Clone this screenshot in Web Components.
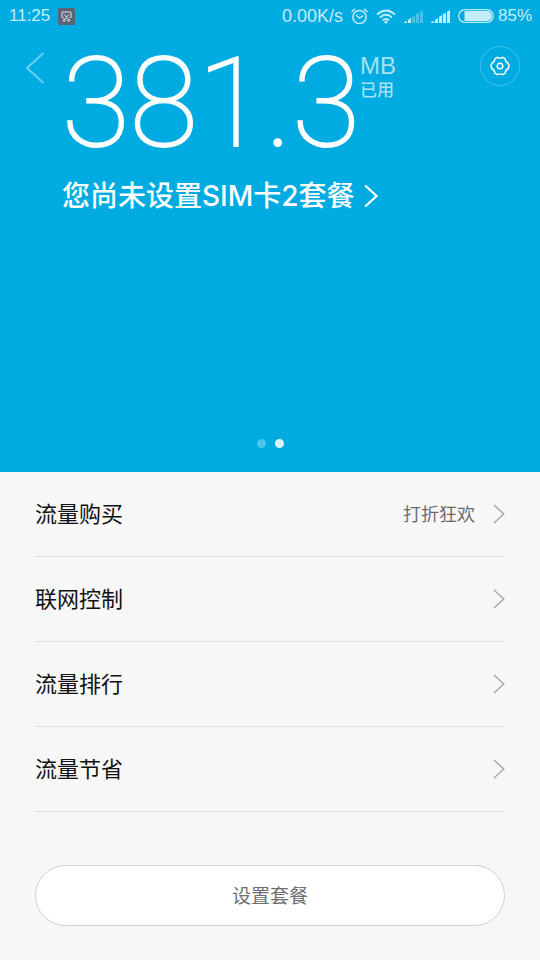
<!DOCTYPE html>
<html lang="zh-CN">
<head>
<meta charset="utf-8">
<meta name="viewport" content="width=device-width, initial-scale=1">
<title>流量</title>
<style>
  html, body { margin: 0; min-height: 100%; background: #f7f7f7; }
  body { font-family: "Liberation Sans", "Noto Sans CJK SC", sans-serif; }
</style>
</head>
<body>
<traffic-app></traffic-app>

<script>
const define = (name, html) => {
  customElements.define(name, class extends HTMLElement {
    constructor() {
      super();
      const t = document.createElement('template');
      t.innerHTML = html;
      this.attachShadow({ mode: 'open' }).append(t.content.cloneNode(true));
    }
  });
};

define('status-bar', `
<style>
  :host { display: flex; align-items: center; justify-content: space-between; height: 32px; padding: 0 8px 0 9px; color: #c4edfa; font-size: 17px; line-height: 20px; }
  div { display: flex; align-items: center; }
  .left, .right { gap: 8px; }
  .speed { font-size: 18px; }
  .right .charge { gap: 4px; }
  svg { display: block; }
</style>
<div class="left">
  <span>11:25</span>
  <svg width="17" height="17" viewBox="0 0 17 17" fill="none"><rect width="17" height="17" rx="2" fill="#5b6373"/><path d="M5.500 9.500H4V4.500Q4 4 4.500 4H12.500Q13 4 13 4.500V9.500H11.500M6.300 6.500L10 11.500M10.700 6.500L7 11.500" stroke="#dde6ee"/><circle cx="6.200" cy="12.300" r="1" stroke="#dde6ee"/><circle cx="10.800" cy="12.300" r="1" stroke="#dde6ee"/></svg>
</div>
<div class="right">
  <span class="speed">0.00K/s</span>
  <svg width="17" height="17" viewBox="0 0 17 17" fill="none" stroke="currentColor" stroke-width="1.500" stroke-linecap="round" stroke-linejoin="round"><circle cx="8.500" cy="9" r="6.600"/><path d="M5.500 7.500L8.500 10L11.500 8M1 3.500L3.500 1.200M16 3.500L13.500 1.200"/></svg>
  <svg width="20" height="15" viewBox="0 0 20 15" fill="none" stroke="currentColor" stroke-width="1.900"><path d="M1 5.500Q10-2.500 19 5.500M4 8.500Q10 3 16 8.500M6.800 11.300Q10 8.500 13.200 11.300"/><circle cx="10" cy="13" r="1.600" fill="currentColor" stroke="none"/></svg>
  <svg width="19" height="13" viewBox="0 0 19 13" fill="currentColor"><path d="M0 13V12L3 11V13ZM4 13V10L7 8V13Z"/><path opacity=".35" d="M8 13V7L11 5V13ZM12 13V4L15 3V13ZM16 13V2L19 0V13Z"/></svg>
  <svg width="19" height="13" viewBox="0 0 19 13" fill="currentColor"><path d="M0 13V12L3 11V13ZM4 13V10L7 8V13ZM8 13V7L11 5V13ZM12 13V4L15 3V13ZM16 13V2L19 0V13Z"/></svg>
  <div class="charge">
    <svg width="36" height="14" viewBox="0 0 36 14"><rect x=".7" y=".7" width="34.600" height="12.600" rx="6.300" fill="none" stroke="currentColor" stroke-width="1.200"/><path d="M6.500 2H29A5 5 0 0 1 29 12H6.500Z" fill="currentColor"/></svg>
    <span>85%</span>
  </div>
</div>`);

define('chevron-icon', `
<style>
  :host { display: block; width: 12px; height: 20px; }
  svg { display: block; width: 100%; height: 100%; }
  path { stroke-width: var(--chevron-stroke, 1.4); }
</style>
<svg viewBox="0 0 12 20" fill="none" stroke="currentColor"><path d="M1 1L10.800 10L1 19"/></svg>`);

define('usage-hero', `
<style>
  :host { display: flex; flex-direction: column; min-height: 472px; background: #00abe1; color: #fff; }
  .top { display: grid; grid-template-columns: 62px auto 1fr 40px; padding-right: 20px; align-items: start; }
  button { font: inherit; color: inherit; background: none; border: 0; padding: 0; cursor: pointer; }
  .back { width: 62px; height: 48px; padding-left: 25px; margin-top: 12px; color: #6fd0ef; }
  .gear { display: grid; place-items: center; width: 40px; height: 40px; border: 1px solid #46c3ea; border-radius: 50%; margin-top: 14px; }
  svg { display: block; }
  .value { font-family: Roboto, sans-serif; font-weight: 100; font-size: 124px; line-height: 144px; -webkit-text-stroke: 2px currentColor; }
  .unit { padding-top: 20px; color: #a5e2f5; font-size: 24px; line-height: 28px; }
  .unit small { display: block; font-size: 17px; line-height: 22px; font-weight: 500; }
  a { display: flex; align-items: center; gap: 9px; align-self: flex-start; margin-left: 62px; color: inherit; text-decoration: none; font-family: Inter, "Noto Sans CJK SC", sans-serif; font-size: 28px; line-height: 40px; font-weight: 500; }
  a chevron-icon { width: 14px; height: 24px; }
  .dots { display: flex; justify-content: center; gap: 9px; margin-top: auto; padding-bottom: 24px; }
  .dots i { width: 9px; height: 9px; border-radius: 50%; background: #4dc4ea; }
  .dots i.on { background: #d9f5fa; }
</style>
<status-bar></status-bar>
<div class="top">
  <button class="back" aria-label="返回"><svg width="20" height="32" viewBox="0 0 20 32" fill="none" stroke="currentColor" stroke-width="2"><path d="M18.500 1L2 16L18.500 31"/></svg></button>
  <div class="value">381.3</div>
  <div class="unit">MB<small>已用</small></div>
  <button class="gear" aria-label="设置"><svg width="20" height="20" viewBox="0 0 20 20" fill="none" stroke="currentColor" stroke-width="1.400"><path d="M7.200 1.300Q10 3 12.800 1.300L15.200 2.800Q15.200 6 18.200 7.500Q19.800 10 18.200 12.500Q15.200 14 15.200 17.200L12.800 18.700Q10 17 7.200 18.700L4.800 17.200Q4.800 14 1.800 12.500Q.2 10 1.800 7.500Q4.800 6 4.800 2.800Z" stroke-linejoin="round"/><circle cx="10" cy="10" r="2.800"/></svg></button>
</div>
<a href="#plan"><span>您尚未设置SIM卡2套餐</span><chevron-icon style="--chevron-stroke: 1.800"></chevron-icon></a>
<div class="dots"><i></i><i class="on"></i></div>`);

define('menu-row', `
<style>
  :host { display: block; border-bottom: 1px solid #dcdcdc; }
  a { display: flex; align-items: center; height: 84px; color: #111; text-decoration: none; font-size: 22px; line-height: 32px; }
  .label, .note { padding-top: 2px; }
  .note { margin-left: auto; padding-right: 18px; font-size: 18px; color: #6c6c6c; }
  chevron-icon { color: #a6a6a6; }
</style>
<a href="#"><span class="label"><slot></slot></span><span class="note"><slot name="note"></slot></span><chevron-icon></chevron-icon></a>`);

define('pill-button', `
<style>
  :host { display: block; }
  button { display: block; width: 100%; height: 61px; padding: 0 0 2px; border: 1px solid #d0d0d0; border-radius: 31px; background: #fff; color: #6e6e6e; font: inherit; font-size: 19px; cursor: pointer; }
</style>
<button><slot></slot></button>`);

define('traffic-app', `
<style>
  :host { display: block; }
  main { padding: 0 35px 34px; background: #f7f7f7; }
  pill-button { margin-top: 53px; }
</style>
<usage-hero></usage-hero>
<main>
  <menu-row>流量购买<span slot="note">打折狂欢</span></menu-row>
  <menu-row>联网控制</menu-row>
  <menu-row>流量排行</menu-row>
  <menu-row>流量节省</menu-row>
  <pill-button>设置套餐</pill-button>
</main>`);
</script>
</body>
</html>
